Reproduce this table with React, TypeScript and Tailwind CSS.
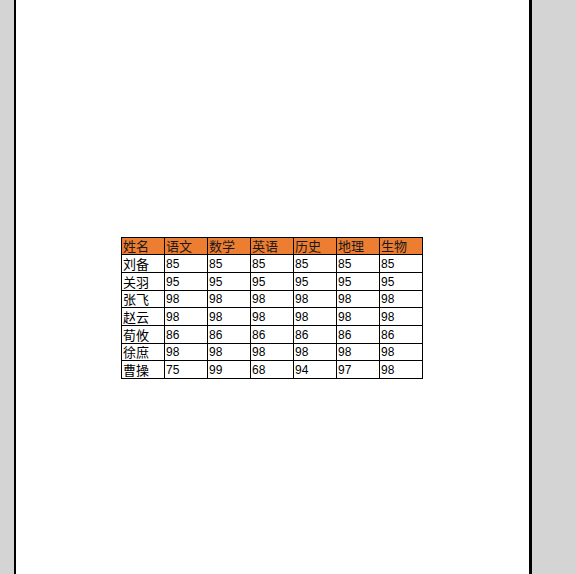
import { Fragment } from "react";

const headers = ["姓名", "语文", "数学", "英语", "历史", "地理", "生物"];

const rows: [string, ...number[]][] = [
  ["刘备", 85, 85, 85, 85, 85, 85],
  ["关羽", 95, 95, 95, 95, 95, 95],
  ["张飞", 98, 98, 98, 98, 98, 98],
  ["赵云", 98, 98, 98, 98, 98, 98],
  ["荀攸", 86, 86, 86, 86, 86, 86],
  ["徐庶", 98, 98, 98, 98, 98, 98],
  ["曹操", 75, 99, 68, 94, 97, 98],
];

const cjk = "font-['SimSun','Noto_Sans_CJK_SC',sans-serif]";

export default function App() {
  return (
    <div className="flex h-[574px] w-[576px] overflow-hidden bg-[#d4d4d4]">
      <div className="w-[14px] shrink-0" />
      <div className="w-[2px] shrink-0 bg-black" />
      <div className="flex w-[513px] shrink-0 flex-col bg-white pt-[237px] pl-[105px]">
        <div className="grid w-[302px] grid-cols-[43px_43px_43px_43px_43px_43px_43px] grid-rows-[17px_18px_18px_17px_18px_18px_17px_18px] border-l border-t border-black">
          {headers.map((h) => (
            <div
              key={h}
              className={`flex items-center border-b border-r border-black bg-[#ed7d31] pl-[1px] text-[13px] leading-[14px] text-[#1a1a1a] ${cjk}`}
            >
              {h}
            </div>
          ))}
          {rows.map(([name, ...scores]) => (
            <Fragment key={name}>
              <div
                className={`flex items-center border-b border-r border-black pl-[1px] text-[13px] leading-[14px] text-black ${cjk}`}
              >
                {name}
              </div>
              {scores.map((s, i) => (
                <div
                  key={i}
                  className="flex items-center border-b border-r border-black pl-[1px] font-['Liberation_Sans',sans-serif] text-[12px] leading-[14px] text-black"
                >
                  {s}
                </div>
              ))}
            </Fragment>
          ))}
        </div>
      </div>
      <div className="w-[3px] shrink-0 bg-black" />
    </div>
  );
}
